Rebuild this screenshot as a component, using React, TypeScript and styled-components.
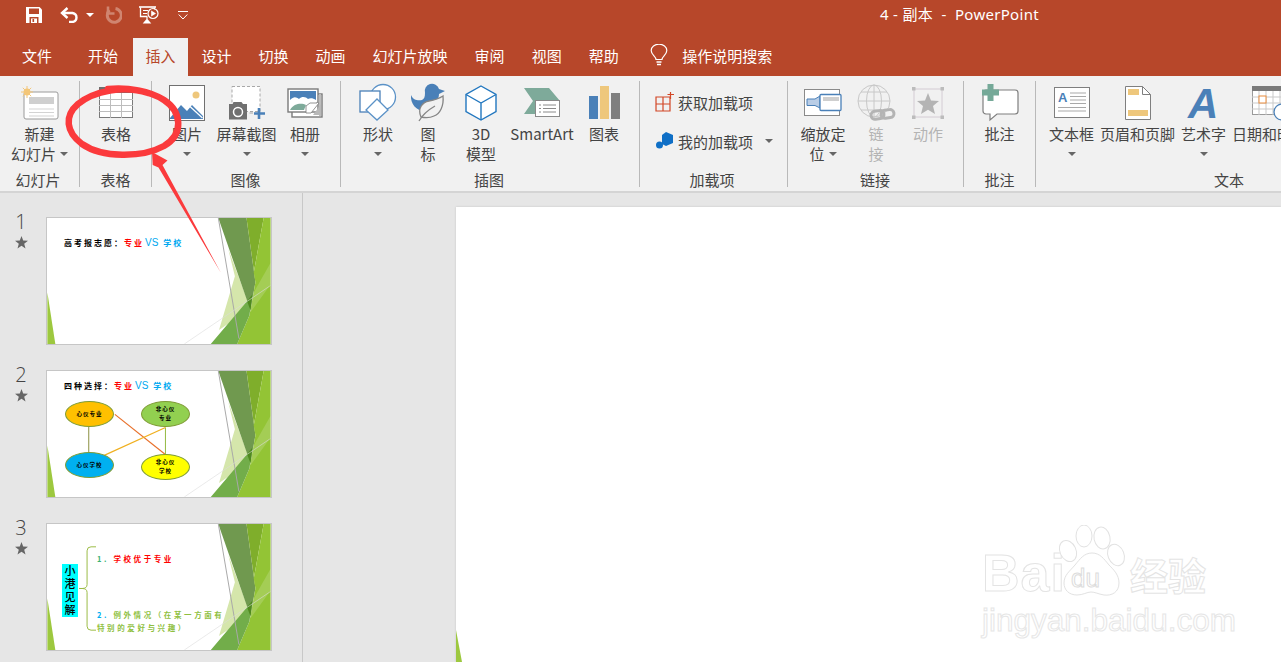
import React from 'react';
import styled, { createGlobalStyle } from 'styled-components';

const RED = '#b7472a';
const CJK = `'Noto Sans CJK SC', 'Noto Sans', sans-serif`;

const GlobalStyle = createGlobalStyle`
  html, body {
    margin: 0;
    padding: 0;
    height: 100%;
    overflow: hidden;
    background: #e6e6e6;
  }
  body {
    font-family: ${CJK};
  }
`;

const Page = styled.div`
  position: relative;
  width: 1281px;
  height: 662px;
  overflow: hidden;
  display: flex;
  flex-direction: column;
`;

/* title bar */
const TitleBar = styled.div`
  height: 38px;
  background: ${RED};
  display: flex;
  align-items: flex-start;
  padding-left: 25px;
  color: #fff;
`;

const Qat = styled.div`
  display: flex;
  align-items: center;
  height: 30px;
  width: 855px;
  svg {
    display: block;
  }
`;

const QatGap = styled.span<{ $w: number }>`
  display: inline-block;
  width: ${(p) => p.$w}px;
`;

const DocTitle = styled.div`
  font-size: 15px;
  line-height: 28px;
  white-space: pre;
  font-family: 'Noto Sans', ${CJK};
  letter-spacing: 0.3px;
`;

/* tabs */
const TabBar = styled.div`
  height: 38px;
  background: ${RED};
  display: flex;
  align-items: stretch;
  padding-left: 8.5px;
`;

const Tab = styled.div<{ $active?: boolean; $after?: number }>`
  display: flex;
  align-items: center;
  justify-content: center;
  padding: 0 ${(p) => (p.$active ? 12.5 : 13.5)}px 4px;
  margin-right: ${(p) => p.$after ?? 0}px;
  font-size: 15px;
  color: ${(p) => (p.$active ? RED : '#fff')};
  background: ${(p) => (p.$active ? '#f1f1f1' : 'transparent')};
  white-space: nowrap;
`;

const SearchHint = styled.div`
  display: flex;
  align-items: center;
  gap: 14px;
  margin-left: 18px;
  padding-bottom: 4px;
  font-size: 15px;
  color: #fff;
  white-space: nowrap;
`;

/* ribbon */
const Ribbon = styled.div`
  height: 117px;
  box-sizing: border-box;
  background: #f1f1f1;
  border-bottom: 2px solid #d4d4d4;
  padding-top: 5px;
  display: flex;
  align-items: flex-start;
  overflow: hidden;
  color: #444;
`;

const Group = styled.div<{ $w: number; $pad?: number; $last?: boolean }>`
  flex: none;
  box-sizing: border-box;
  width: ${(p) => p.$w}px;
  height: 106px;
  display: flex;
  flex-direction: column;
  border-right: ${(p) => (p.$last ? 'none' : '1px solid #b9b9b9')};
  padding-left: ${(p) => p.$pad ?? 0}px;
`;

const GroupBody = styled.div`
  flex: none;
  height: 89px;
  display: flex;
`;

const GroupName = styled.div<{ $center?: number }>`
  flex: none;
  font-size: 15px;
  line-height: 20px;
  text-align: center;
  color: #444;
  white-space: nowrap;
  ${(p) => (p.$center ? `width: ${p.$center}px;` : '')}
`;

const BigButton = styled.div<{ $w: number; $off?: boolean }>`
  flex: none;
  width: ${(p) => p.$w}px;
  display: flex;
  flex-direction: column;
  align-items: center;
  color: ${(p) => (p.$off ? '#b4b4b4' : '#444')};
`;

const IconSlot = styled.div`
  height: 43px;
  display: flex;
  align-items: center;
  justify-content: center;
  svg {
    display: block;
    overflow: visible;
  }
`;

const BtnLine = styled.div`
  height: 20px;
  display: flex;
  align-items: center;
  justify-content: center;
  gap: 4px;
  font-size: 15px;
  line-height: 20px;
  white-space: nowrap;
`;

const Caret = styled.i`
  display: inline-block;
  width: 0;
  height: 0;
  border-left: 4px solid transparent;
  border-right: 4px solid transparent;
  border-top: 4px solid #666;
`;

const QatCaret = styled(Caret)`
  border-top-color: #fff;
`;

const AddinColumn = styled.div`
  display: flex;
  flex-direction: column;
  gap: 15px;
  padding-top: 9px;
`;

const AddinRow = styled.div`
  display: flex;
  align-items: center;
  gap: 3px;
  height: 24px;
  font-size: 15px;
  color: #444;
  white-space: nowrap;
  svg {
    display: block;
  }
`;

const AddinCaret = styled(Caret)`
  margin-left: 9px;
`;

/* work area */
const Work = styled.div`
  flex: 1;
  display: flex;
  min-height: 0;
`;

const Pane = styled.div`
  flex: none;
  width: 303px;
  box-sizing: border-box;
  border-right: 1px solid #c8c8c8;
  padding-top: 24px;
  display: flex;
  flex-direction: column;
  gap: 25px;
`;

const SlideRow = styled.div`
  display: flex;
  align-items: flex-start;
`;

const SlideMeta = styled.div`
  width: 46px;
  padding-right: 4px;
  box-sizing: border-box;
  margin-top: -8px;
  display: flex;
  flex-direction: column;
  align-items: center;
  color: #555;
`;

const SlideNum = styled.div`
  font-family: 'Open Sans', sans-serif;
  font-size: 20px;
  line-height: 26px;
  font-weight: 300;
  color: #444;
`;

const Star = styled.svg`
  display: block;
  margin-top: 1px;
`;

const Thumb = styled.div`
  position: relative;
  width: 226px;
  height: 128px;
  box-sizing: border-box;
  border: 1px solid #c6c6c6;
  background: #fff;
  overflow: hidden;
`;

const ThumbArt = styled.svg`
  position: absolute;
  left: 0;
  top: 0;
`;

const ThumbTitle = styled.div<{ $top: number }>`
  position: absolute;
  left: 17px;
  top: ${(p) => p.$top}px;
  display: flex;
  align-items: center;
  font-size: 8px;
  line-height: 12px;
  font-weight: 700;
  letter-spacing: 2px;
  color: #000;
  white-space: nowrap;
`;

const Ink = styled.span<{ $c: string }>`
  color: ${(p) => p.$c};
`;

const VS = styled.span`
  color: #00a8f0;
  font-family: 'Liberation Sans', sans-serif;
  font-weight: 400;
  letter-spacing: 0;
  font-size: 10px;
  margin: 0 5px 0 1px;
`;

const Oval = styled.div<{ $x: number; $y: number; $bg: string }>`
  position: absolute;
  left: ${(p) => p.$x}px;
  top: ${(p) => p.$y}px;
  width: 49px;
  height: 26px;
  box-sizing: border-box;
  border: 1px solid #7f9c35;
  border-radius: 50%;
  background: ${(p) => p.$bg};
  display: flex;
  align-items: center;
  justify-content: center;
  text-align: center;
  font-size: 5.5px;
  line-height: 9px;
  font-weight: 700;
  letter-spacing: 1px;
  color: #000;
`;

const CyanNote = styled.div`
  position: absolute;
  left: 15px;
  top: 40px;
  width: 16px;
  height: 53px;
  background: #00ffff;
  color: #000;
  font-size: 11px;
  line-height: 13px;
  font-weight: 500;
  text-align: center;
`;

const NoteLine = styled.div<{ $top: number }>`
  position: absolute;
  left: 50px;
  top: ${(p) => p.$top}px;
  font-size: 7.5px;
  line-height: 12px;
  font-weight: 700;
  letter-spacing: 2.6px;
  white-space: nowrap;
`;

const Stage = styled.div`
  position: relative;
  flex: 1;
  padding: 14px 0 0 153px;
  display: flex;
  overflow: hidden;
`;

const MainSlide = styled.div`
  position: relative;
  flex: 1;
  background: #fff;
  box-shadow: 0 0 2px #c4c4c4;
  svg {
    position: absolute;
    left: 0;
    bottom: 0;
  }
`;

const Watermark = styled.div`
  position: absolute;
  left: 679px;
  top: 332px;
  width: 240px;
  color: #fff;
  -webkit-text-stroke: 1px #e4e4e4;
  white-space: nowrap;
`;

const MarkTop = styled.div`
  display: flex;
  align-items: flex-end;
  height: 72px;
  font-family: 'Liberation Sans', sans-serif;
  font-weight: 700;
`;

const MarkBai = styled.span`
  font-size: 52px;
  line-height: 47px;
  letter-spacing: 1px;
`;

const Paw = styled.div`
  position: relative;
  width: 72px;
  height: 72px;
  flex: none;
  margin-left: -10px;
  svg {
    position: absolute;
    left: 0;
    top: 0;
  }
`;

const PawDu = styled.span`
  position: absolute;
  left: 15px;
  top: 39px;
  font-size: 26px;
  line-height: 28px;
  font-weight: 400;
  -webkit-text-stroke: 1px #dcdcdc;
`;

const MarkCn = styled.span`
  font-family: ${CJK};
  font-size: 38px;
  line-height: 46px;
  margin-left: 2px;
`;

const MarkUrl = styled.div`
  font-family: 'Liberation Sans', sans-serif;
  font-size: 31.5px;
  line-height: 34px;
  margin-top: 6px;
  -webkit-text-stroke: 1px #e6e6e6;
`;

const Annotation = styled.svg`
  position: absolute;
  left: 0;
  top: 0;
  pointer-events: none;
`;

/* icons */
const SaveIcon = () => (
  <svg width="18" height="18" viewBox="0 0 18 18">
    <path d="M1 1h13.500L17 3.500V17H1z" fill="#fff" />
    <rect x="4" y="2.500" width="10" height="5.500" fill={RED} />
    <rect x="4.500" y="11" width="9" height="6" fill={RED} />
    <rect x="6" y="12.500" width="6" height="4.500" fill="#fff" />
    <rect x="7.500" y="13" width="1.600" height="3" fill={RED} />
  </svg>
);

const UndoIcon = () => (
  <svg width="20" height="16" viewBox="0 0 20 16" fill="none">
    <path d="M2 6h10.500a5 4.600 0 0 1 0 9H9" stroke="#fff" strokeWidth="2.400" />
    <path d="M7.500 1 2 6l5.500 5" stroke="#fff" strokeWidth="2.400" />
  </svg>
);

const RedoIcon = () => (
  <svg width="17" height="18" viewBox="0 0 17 18" fill="none">
    <path d="M10.500 2.400A7 7 0 1 1 4.500 4.200" stroke="#d08570" strokeWidth="3" />
    <path d="M3 .500v7h6.500" stroke="#d08570" strokeWidth="2.600" />
  </svg>
);

const PresentIcon = () => (
  <svg width="20" height="18" viewBox="0 0 20 18" fill="none">
    <path d="M0 1h17" stroke="#fff" strokeWidth="1.600" />
    <path d="M1.500 1.500v9h7M15.500 1.500v2" stroke="#fff" strokeWidth="1.300" />
    <path d="M4 4.500h5M4 7.500h4" stroke="#fff" strokeWidth="1.200" />
    <circle cx="14" cy="7.500" r="5" stroke="#fff" strokeWidth="1.200" />
    <path d="M12.200 4.500v6l4.800-3z" fill="#fff" />
    <path d="M8 11v2.500M5 17l3-3.500 3 3.500z" fill="#fff" stroke="#fff" strokeWidth="1.200" />
  </svg>
);

const QatMore = () => (
  <svg width="10" height="9" viewBox="0 0 10 9" fill="none">
    <path d="M0 .5h10" stroke="#fff" />
    <path d="M.7 3.500 5 8l4.300-4.500" stroke="#fff" />
  </svg>
);

const BulbIcon = () => (
  <svg width="18" height="23" viewBox="0 0 18 23" fill="none">
    <path
      d="M6 15.500c0-3-4.800-4.600-4.800-9A7.600 6.200 0 0 1 16.800 6.500c0 4.400-4.800 6-4.800 9z"
      stroke="#fff"
      strokeWidth="1.200"
    />
    <path d="M6.500 18h5M7 20.500h4" stroke="#fff" strokeWidth="1.600" />
  </svg>
);

const NewSlideIcon = () => (
  <svg width="40" height="34" viewBox="0 0 40 34" fill="none">
    <rect x="4" y="6" width="34" height="27" rx="2" fill="#fff" stroke="#9a9a9a" />
    <rect x="9" y="11" width="25" height="7" fill="#cfcfcf" />
    <path d="M9 23h25M9 26.500h25M9 30h25" stroke="#c8c8c8" strokeWidth=".8" />
    <circle cx="7" cy="6" r="3.400" fill="#f3c679" />
    <path
      d="M7 0v12M1 6h12M2.800 1.800l8.400 8.400M11.200 1.800l-8.400 8.400"
      stroke="#f3c679"
      strokeWidth="1"
    />
  </svg>
);

const TableIcon = () => (
  <svg width="34" height="31" viewBox="0 0 34 31" fill="none">
    <rect x=".5" y=".5" width="33" height="30" fill="#fff" stroke="#7a7a7a" />
    <rect x="0" y="0" width="34" height="6" fill="#6e6e6e" />
    <path d="M0 12.500h34M0 18.500h34M0 24.500h34M11.500 6v25M22.500 6v25" stroke="#bdbdbd" />
  </svg>
);

const PictureIcon = () => (
  <svg width="36" height="36" viewBox="0 0 36 36" fill="none">
    <rect x=".5" y=".5" width="35" height="35" fill="#fff" stroke="#707070" />
    <circle cx="27" cy="10" r="3.500" fill="#eec77c" />
    <path d="M1 33 12 20l6 6 5-6 11 11v3H1z" fill="#4a80b8" />
    <path d="M21 21.500 33.500 33" stroke="#fff" strokeWidth="1.200" />
  </svg>
);

const ScreenshotIcon = () => (
  <svg width="36" height="34" viewBox="0 0 36 34" fill="none">
    <rect x="3" y=".5" width="28" height="25" fill="#fff" stroke="#a8a8a8" strokeDasharray="3 2" />
    <path d="M0 18h3.500l1-2h8l1.500 2H18v15.500H0z" fill="#707070" />
    <circle cx="9" cy="26" r="4.500" fill="#707070" stroke="#fff" strokeWidth="1.500" />
    <path d="M20.500 27H24" stroke="#a8a8a8" />
    <path d="M30 22v11M25 27.500h11" stroke="#4a80b8" strokeWidth="2.600" />
  </svg>
);

const AlbumIcon = () => (
  <svg width="36" height="30" viewBox="0 0 36 30" fill="none">
    <rect x="5" y="6" width="30" height="23" fill="#fff" stroke="#7a7a7a" strokeWidth="1.400" />
    <rect x="32" y="6" width="2" height="22" fill="#bdbdbd" />
    <rect x="1" y="1" width="30" height="23" fill="#fff" stroke="#7a7a7a" strokeWidth="1.400" />
    <rect x="3" y="3" width="26" height="9" fill="#4a80b8" />
    <path d="M3 12c4-4 6-3 9-1 3-3 7-2 9 0 2-1 5-1 8 1v5H3z" fill="#fff" />
    <path d="M3 22c4-7 12-7 16-5l-2 5z" fill="#7eaa9a" />
    <path d="M20 24l9-9" stroke="#7a7a7a" />
    <path d="M19 25v-7l4-3h7v-1l2 1-8 10z" fill="#fff" stroke="#7a7a7a" strokeWidth=".8" />
    <path d="M26 27l8-11v11z" fill="#b8b8b8" />
  </svg>
);

const ShapesIcon = () => (
  <svg width="38" height="37" viewBox="0 0 38 37" fill="none">
    <circle cx="24" cy="13" r="12.500" fill="#fff" stroke="#5b92c7" strokeWidth="1.300" />
    <rect x="1" y="7" width="20" height="21" fill="#fff" stroke="#4a80b8" strokeWidth="1.300" />
    <path d="M18 15l11 11-11 10-11-10z" fill="#fff" stroke="#5b92c7" strokeWidth="1.300" />
  </svg>
);

const DuckIcon = () => (
  <svg width="36" height="38" viewBox="0 0 36 38" fill="none">
    <path
      d="M1 11C3 16 8 17 12 16 14 15 15 13 15 9A7 7 0 1 1 29 5L35 7 29 10C29 15 26 19 22 22 20 26 17 27 14 27 7 27 0 20 1 11z"
      fill="#4a80b8"
    />
    <path
      d="M11 33C7 24 13 18 19 17 25 16 30 14 33 12 34 22 30 30 24 32 20 34 15 34 11 33z"
      fill="#f1f1f1"
      stroke="#858585"
      strokeWidth="1.300"
    />
    <path d="M9 37C13 30 18 26 25 22" stroke="#858585" strokeWidth="1.300" />
  </svg>
);

const CubeIcon = () => (
  <svg width="32" height="36" viewBox="0 0 32 36" fill="none" stroke="#2277bf" strokeWidth="1.400">
    <path d="M16 1l15 8.500v17L16 35 1 26.500v-17z" fill="#fff" />
    <path d="M1 9.500 16 18l15-8.500M16 18v17" />
  </svg>
);

const SmartArtIcon = () => (
  <svg width="36" height="29" viewBox="0 0 36 29" fill="none">
    <path d="M0 0h25l11 13-11 13H0l9-13z" fill="#7eaa9a" />
    <rect x="11.500" y="12.500" width="24" height="16" fill="#fff" stroke="#8a8a8a" />
    <path d="M15 17h2M19 17h13M15 20.500h2M19 20.500h13M15 24h2M19 24h13" stroke="#8a8a8a" />
  </svg>
);

const ChartIcon = () => (
  <svg width="31" height="33" viewBox="0 0 31 33">
    <rect x="0" y="10" width="9" height="23" fill="#4a80b8" />
    <rect x="11" y="0" width="9" height="33" fill="#eec77c" />
    <rect x="22" y="7" width="9" height="26" fill="#7f7f7f" />
  </svg>
);

const StoreIcon = () => (
  <svg width="20" height="20" viewBox="0 0 20 20" fill="none" stroke="#d24726" strokeWidth="1.200">
    <path d="M1 5h14v14H1zM8 5v14M1 12h14" />
    <path d="M15.500 0v7M12.500 2.500h6.500" />
  </svg>
);

const MyAddinIcon = () => (
  <svg width="20" height="18" viewBox="0 0 20 18">
    <path d="M11 0l7 3v8l-7 3-4-2V3z" fill="#0f6fc6" />
    <circle cx="4.500" cy="13" r="3.500" fill="#0f6fc6" />
  </svg>
);

const ZoomIcon = () => (
  <svg width="38" height="28" viewBox="0 0 38 28" fill="none">
    <rect x=".5" y=".5" width="35" height="26" fill="#fff" stroke="#8a8a8a" />
    <path d="M3 10h8l5-3v12l-5-2.500H3z" fill="#b9cde6" stroke="#4a80b8" />
    <rect x="16" y="5.500" width="21" height="16" rx="1" fill="#fff" stroke="#4a80b8" strokeWidth="1.300" />
    <rect x="19" y="8" width="16" height="4" fill="#cfcfcf" />
  </svg>
);

const LinkIcon = () => (
  <svg width="38" height="38" viewBox="0 0 38 38" fill="none">
    <g stroke="#c8c8c8" strokeWidth="1">
      <circle cx="17" cy="17" r="16" />
      <ellipse cx="17" cy="17" rx="7.500" ry="16" />
      <path d="M1 17h32M4 8h26M4 26h26M17 1v32" />
    </g>
    <g stroke="#b4b4b4" strokeWidth="3">
      <rect x="14" y="27" width="13" height="8" rx="4" transform="rotate(-8 20 31)" />
      <rect x="24" y="26" width="13" height="8" rx="4" transform="rotate(-8 30 30)" />
    </g>
  </svg>
);

const ActionIcon = () => (
  <svg width="32" height="32" viewBox="0 0 32 32" fill="none">
    <rect x="2" y="2" width="28" height="28" stroke="#d4ccd4" />
    <path d="M0 0h3.500v3.500H0zM28.500 0H32v3.500h-3.500zM0 28.500h3.500V32H0zM28.500 28.500H32V32h-3.500z" fill="#bcbcbc" />
    <path d="M16 6l3 7.500 8 .5-6 5 2 8-7-4.300L9 27l2-8-6-5 8-.5z" fill="#b4b4b4" />
  </svg>
);

const CommentIcon = () => (
  <svg width="38" height="37" viewBox="0 0 38 37" fill="none">
    <path
      d="M5 6h29a3 3 0 0 1 3 3v18a3 3 0 0 1-3 3H16l-7 6v-6H5a3 3 0 0 1-3-3V9a3 3 0 0 1 3-3z"
      fill="#fff"
      stroke="#7f7f7f"
      strokeWidth="1.200"
    />
    <path d="M9.500 0v17M1 8.500h17" stroke="#75a998" strokeWidth="6" />
  </svg>
);

const IconLetter = styled.text`
  font-family: 'Liberation Sans', sans-serif;
  font-weight: 700;
  fill: #4a80b8;
`;

const TextBoxIcon = () => (
  <svg width="36" height="31" viewBox="0 0 36 31" fill="none">
    <rect x=".5" y=".5" width="35" height="30" fill="#fff" stroke="#7f7f7f" />
    <IconLetter x="4" y="15" fontSize="13">A</IconLetter>
    <path d="M16 6h16M16 9.500h16M16 13h16M16 16.500h16M4 20.500h28M4 24h28" stroke="#a9a9a9" />
  </svg>
);

const HeaderFooterIcon = () => (
  <svg width="26" height="34" viewBox="0 0 26 34" fill="none">
    <path d="M.5.500h17l8 8v25H.5z" fill="#fff" stroke="#7f7f7f" />
    <path d="M17.500.500v8h8" stroke="#7f7f7f" />
    <rect x="3" y="3" width="11" height="6" fill="#eec77c" />
    <rect x="3" y="24" width="20" height="6" fill="#eec77c" />
  </svg>
);

const WordArtIcon = () => (
  <svg width="30" height="34" viewBox="0 0 30 34">
    <IconLetter x="-1" y="32" fontSize="42" fontStyle="italic">A</IconLetter>
  </svg>
);

const DateIcon = () => (
  <svg width="36" height="34" viewBox="0 0 36 34" fill="none">
    <rect x=".5" y=".5" width="35" height="28" fill="#fff" stroke="#9a9a9a" />
    <rect x="0" y="0" width="36" height="5" fill="#7a7a7a" />
    <path d="M0 11h36M0 17h36M0 23h36M7 5v24M14 5v24M21 5v24M28 5v24" stroke="#c9c9c9" />
    <rect x="7" y="10" width="7" height="7" fill="#fff" stroke="#e88a3a" />
    <circle cx="30" cy="26" r="8" fill="#fff" stroke="#4a80b8" strokeWidth="1.300" />
  </svg>
);

/* the green facets every slide carries */
const SlideArt = () => (
  <ThumbArt width="224" height="126" viewBox="0 0 225 127">
    <path d="M0 75 8 127H0z" fill="#9dc83f" />
    <path d="M182.300 31.300 189 58.700 173 113 204.700 91.300z" fill="#d5e6ab" />
    <path d="M172.300 0H200.700L209.700 64.700 204.700 93z" fill="#70994f" />
    <path d="M200.700 0H218L208 55 209.700 64.700z" fill="#7fae2b" />
    <path d="M218 0H225V127H191.300L203.700 98 209.700 64.700 208 55z" fill="#93c435" />
    <path d="M164.700 127 201.300 84 206.300 78 203.700 98 191.300 127z" fill="#72ad4a" />
    <path d="M201.300 84 207 76.500 204.700 93z" fill="#4f8a1f" />
    <path d="M206.300 78 225 45V67L204.700 95z" fill="#fff" fillOpacity=".16" />
    <path d="M172.300 0 193 121.300" stroke="#a8a8a8" fill="none" />
    <path d="M138 127 225 68" stroke="#dcdcdc" strokeOpacity=".6" fill="none" />
  </ThumbArt>
);

const ThumbStar = () => (
  <Star width="13" height="13" viewBox="0 0 13 13">
    <path d="M6.500 0l1.700 4.500 4.800.2-3.800 3 1.300 4.800-4-2.700-4 2.700 1.300-4.800L0 4.700l4.800-.2z" fill="#666" />
  </Star>
);

const Row: React.FC<{ n: number; children: React.ReactNode }> = ({ n, children }) => (
  <SlideRow>
    <SlideMeta>
      <SlideNum>{n}</SlideNum>
      <ThumbStar />
    </SlideMeta>
    <Thumb>
      <SlideArt />
      {children}
    </Thumb>
  </SlideRow>
);

const App: React.FC = () => {
  return (
    <Page>
      <GlobalStyle />
      <TitleBar>
        <Qat>
          <SaveIcon />
          <QatGap $w={17} />
          <UndoIcon />
          <QatGap $w={6} />
          <QatCaret />
          <QatGap $w={11} />
          <RedoIcon />
          <QatGap $w={17} />
          <PresentIcon />
          <QatGap $w={19} />
          <QatMore />
        </Qat>
        <DocTitle>{'4 - 副本  -  PowerPoint'}</DocTitle>
      </TitleBar>

      <TabBar>
        <Tab $after={9}>文件</Tab>
        <Tab $after={1.5}>开始</Tab>
        <Tab $active>插入</Tab>
        <Tab>设计</Tab>
        <Tab>切换</Tab>
        <Tab>动画</Tab>
        <Tab>幻灯片放映</Tab>
        <Tab>审阅</Tab>
        <Tab>视图</Tab>
        <Tab>帮助</Tab>
        <SearchHint>
          <BulbIcon />
          操作说明搜索
        </SearchHint>
      </TabBar>

      <Ribbon>
        <Group $w={80}>
          <GroupBody>
            <BigButton $w={79}>
              <IconSlot><NewSlideIcon /></IconSlot>
              <BtnLine>新建</BtnLine>
              <BtnLine>幻灯片<Caret /></BtnLine>
            </BigButton>
          </GroupBody>
          <GroupName $center={76}>幻灯片</GroupName>
        </Group>

        <Group $w={72}>
          <GroupBody>
            <BigButton $w={72}>
              <IconSlot><TableIcon /></IconSlot>
              <BtnLine>表格</BtnLine>
            </BigButton>
          </GroupBody>
          <GroupName>表格</GroupName>
        </Group>

        <Group $w={189} $pad={5}>
          <GroupBody>
            <BigButton $w={60}>
              <IconSlot><PictureIcon /></IconSlot>
              <BtnLine>图片</BtnLine>
              <BtnLine><Caret /></BtnLine>
            </BigButton>
            <BigButton $w={59}>
              <IconSlot><ScreenshotIcon /></IconSlot>
              <BtnLine>屏幕截图</BtnLine>
              <BtnLine><Caret /></BtnLine>
            </BigButton>
            <BigButton $w={58}>
              <IconSlot><AlbumIcon /></IconSlot>
              <BtnLine>相册</BtnLine>
              <BtnLine><Caret /></BtnLine>
            </BigButton>
          </GroupBody>
          <GroupName $center={177}>图像</GroupName>
        </Group>

        <Group $w={299} $pad={12}>
          <GroupBody>
            <BigButton $w={50}>
              <IconSlot><ShapesIcon /></IconSlot>
              <BtnLine>形状</BtnLine>
              <BtnLine><Caret /></BtnLine>
            </BigButton>
            <BigButton $w={50}>
              <IconSlot><DuckIcon /></IconSlot>
              <BtnLine>图</BtnLine>
              <BtnLine>标</BtnLine>
            </BigButton>
            <BigButton $w={56}>
              <IconSlot><CubeIcon /></IconSlot>
              <BtnLine>3D</BtnLine>
              <BtnLine>模型</BtnLine>
            </BigButton>
            <BigButton $w={66}>
              <IconSlot><SmartArtIcon /></IconSlot>
              <BtnLine>SmartArt</BtnLine>
            </BigButton>
            <BigButton $w={58}>
              <IconSlot><ChartIcon /></IconSlot>
              <BtnLine>图表</BtnLine>
            </BigButton>
          </GroupBody>
          <GroupName $center={272}>插图</GroupName>
        </Group>

        <Group $w={148} $pad={15}>
          <GroupBody>
            <AddinColumn>
              <AddinRow><StoreIcon />获取加载项</AddinRow>
              <AddinRow><MyAddinIcon />我的加载项<AddinCaret /></AddinRow>
            </AddinColumn>
          </GroupBody>
          <GroupName $center={114}>加载项</GroupName>
        </Group>

        <Group $w={176} $pad={7}>
          <GroupBody>
            <BigButton $w={56}>
              <IconSlot><ZoomIcon /></IconSlot>
              <BtnLine>缩放定</BtnLine>
              <BtnLine>位<Caret /></BtnLine>
            </BigButton>
            <BigButton $w={50} $off>
              <IconSlot><LinkIcon /></IconSlot>
              <BtnLine>链</BtnLine>
              <BtnLine>接</BtnLine>
            </BigButton>
            <BigButton $w={54} $off>
              <IconSlot><ActionIcon /></IconSlot>
              <BtnLine>动作</BtnLine>
            </BigButton>
          </GroupBody>
          <GroupName $center={160}>链接</GroupName>
        </Group>

        <Group $w={72}>
          <GroupBody>
            <BigButton $w={71}>
              <IconSlot><CommentIcon /></IconSlot>
              <BtnLine>批注</BtnLine>
            </BigButton>
          </GroupBody>
          <GroupName>批注</GroupName>
        </Group>

        <Group $w={290} $pad={6.5} $last>
          <GroupBody>
            <BigButton $w={58}>
              <IconSlot><TextBoxIcon /></IconSlot>
              <BtnLine>文本框</BtnLine>
              <BtnLine><Caret /></BtnLine>
            </BigButton>
            <BigButton $w={74}>
              <IconSlot><HeaderFooterIcon /></IconSlot>
              <BtnLine>页眉和页脚</BtnLine>
            </BigButton>
            <BigButton $w={58}>
              <IconSlot><WordArtIcon /></IconSlot>
              <BtnLine>艺术字</BtnLine>
              <BtnLine><Caret /></BtnLine>
            </BigButton>
            <BigButton $w={74}>
              <IconSlot><DateIcon /></IconSlot>
              <BtnLine>日期和时间</BtnLine>
            </BigButton>
          </GroupBody>
          <GroupName $center={373}>文本</GroupName>
        </Group>
      </Ribbon>

      <Work>
        <Pane>
          <Row n={1}>
            <ThumbTitle $top={19}>
              高考报志愿：<Ink $c="#ff0000">专业</Ink><VS>VS</VS><Ink $c="#00a8f0">学校</Ink>
            </ThumbTitle>
          </Row>

          <Row n={2}>
            <ThumbTitle $top={9}>
              四种选择：<Ink $c="#ff0000">专业</Ink><VS>VS</VS><Ink $c="#00a8f0">学校</Ink>
            </ThumbTitle>
            <ThumbArt width="224" height="126" viewBox="0 0 225 127" fill="none">
              <path d="M41.700 56v26" stroke="#8a8f3f" />
              <path d="M119 57v27" stroke="#92b83f" />
              <path d="M68 43.700 118.300 83.700" stroke="#e8702a" strokeWidth="1.200" />
              <path d="M119 57 56.700 85.300" stroke="#f0b020" strokeWidth="1.200" />
            </ThumbArt>
            <Oval $x={18} $y={30} $bg="#ffc000">心仪专业</Oval>
            <Oval $x={94} $y={30} $bg="#92d050">非心仪<br />专业</Oval>
            <Oval $x={18} $y={81} $bg="#00b0f0">心仪学校</Oval>
            <Oval $x={94} $y={83} $bg="#ffff00">非心仪<br />学校</Oval>
          </Row>

          <Row n={3}>
            <CyanNote>小港见解</CyanNote>
            <ThumbArt width="224" height="126" viewBox="0 0 225 127" fill="none">
              <path d="M49 23h-5q-4 0-4 4v34q0 4-5 4h-3 3q5 0 5 4v34q0 4 4 4h5" stroke="#9bbb45" />
            </ThumbArt>
            <NoteLine $top={29}>
              <Ink $c="#3bb273">1.&nbsp;</Ink><Ink $c="#ff0000">学校优于专业</Ink>
            </NoteLine>
            <NoteLine $top={85}>
              <Ink $c="#00b0f0">2.&nbsp;</Ink><Ink $c="#8fbf3f">例外情况（在某一方面有</Ink>
            </NoteLine>
            <NoteLine $top={98}>
              <Ink $c="#8fbf3f">特别的爱好与兴趣）</Ink>
            </NoteLine>
          </Row>
        </Pane>

        <Stage>
          <MainSlide>
            <svg width="6" height="32" viewBox="0 0 6 32">
              <path d="M0 0 6 32H0z" fill="#9dc83f" />
            </svg>
          </MainSlide>
          <Watermark>
            <MarkTop>
              <MarkBai>Bai</MarkBai>
              <Paw>
                <svg width="72" height="72" viewBox="0 0 72 72" fill="#fff" stroke="#e2e2e2">
                  <ellipse cx="12" cy="26" rx="8" ry="11" transform="rotate(-25 12 26)" />
                  <ellipse cx="28" cy="11" rx="8" ry="11" />
                  <ellipse cx="46" cy="13" rx="8" ry="11" transform="rotate(-12 46 13)" />
                  <ellipse cx="60" cy="30" rx="8" ry="11" transform="rotate(-22 60 30)" />
                  <path d="M36 28c8 0 12 6 17 12 5 5 10 10 10 18 0 9-7 13-15 12-6-1-9-3-13-3s-8 3-14 3c-8 0-13-5-13-12 0-8 6-12 11-18 5-6 9-12 17-12z" />
                </svg>
                <PawDu>du</PawDu>
              </Paw>
              <MarkCn>经验</MarkCn>
            </MarkTop>
            <MarkUrl>jingyan.baidu.com</MarkUrl>
          </Watermark>
        </Stage>
      </Work>

      <Annotation width="1281" height="662" viewBox="0 0 1281 662" fill="none">
        <path
          d="M148 93C124 85 94 91 78 104 64 116 66 132 82 144 102 158 142 158 164 146 184 134 182 112 164 100 150 91 128 87 108 89"
          stroke="#fb3a3c"
          strokeWidth="6.500"
          strokeLinecap="round"
        />
        <path d="M152 152 167.500 160.500 162.500 165 221 273 158.500 167.500 152.700 165z" fill="#fb3a3c" />
      </Annotation>
    </Page>
  );
};

export default App;
